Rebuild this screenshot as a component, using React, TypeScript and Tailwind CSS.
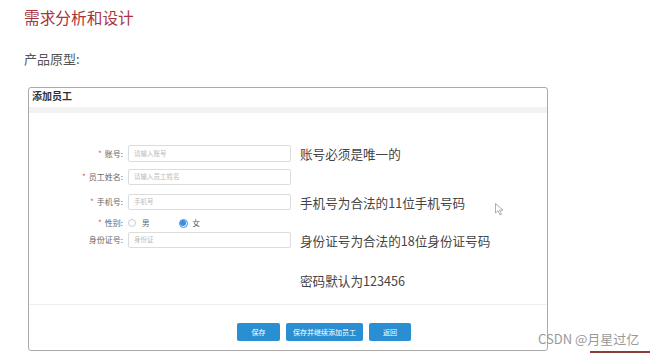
import React from "react";

const font = { fontFamily: '"Noto Sans CJK SC", "Noto Sans", sans-serif' };

function Label({ text, required }: { text: string; required?: boolean }) {
  return (
    <div className="w-[99px] shrink-0 pr-[5px] text-right text-[8px] leading-[12px] text-[#666]">
      {required && <span className="mr-[3px] text-[#e05050]">*</span>}
      {text}:
    </div>
  );
}

function Input({ placeholder, h = "h-[16px]" }: { placeholder: string; h?: string }) {
  return (
    <div
      className={`w-[163px] ${h} shrink-0 rounded-[2px] border border-[#dcdcdc] bg-white pl-[5px] flex items-center text-[6.5px] text-[#bbb]`}
    >
      {placeholder}
    </div>
  );
}

function Note({ text }: { text: string }) {
  return <div className="ml-[9px] whitespace-nowrap text-[12.6px] leading-[17px] text-[#444]">{text}</div>;
}

export default function App() {
  return (
    <div className="relative h-[353px] w-[650px] overflow-hidden bg-white" style={font}>
      <div className="pl-[24px] pt-[8px] text-[15.7px] leading-[20px] text-[#a9343c]">需求分析和设计</div>
      <div className="mt-[22px] pl-[24px] text-[13px] leading-[18px] text-[#555]">产品原型:</div>

      <div className="ml-[28px] mt-[19px] flex h-[264px] w-[520px] flex-col rounded-[3px] border border-[#aaa]">
        <div className="h-[19px] pl-[3px] pt-[1px] text-[10px] font-bold leading-[14px] text-[#333]">添加员工</div>
        <div className="h-[6px] bg-[#f2f2f2]" />

        <div className="flex flex-col pt-[32px]">
          <div className="flex h-[17px] items-center">
            <Label text="账号" required />
            <Input placeholder="请输入账号" h="h-[17px]" />
            <Note text="账号必须是唯一的" />
          </div>
          <div className="mt-[7px] flex h-[16px] items-center">
            <Label text="员工姓名" required />
            <Input placeholder="请输入员工姓名" />
          </div>
          <div className="mt-[9px] flex h-[16px] items-center">
            <Label text="手机号" required />
            <Input placeholder="手机号" />
            <Note text="手机号为合法的11位手机号码" />
          </div>
          <div className="mt-[6px] flex h-[14px] items-center">
            <Label text="性别" required />
            <div className="flex items-center text-[7.5px] text-[#666]">
              <span className="h-[8px] w-[8px] rounded-full border border-[#ccc] bg-white" />
              <span className="ml-[6px]">男</span>
              <span className="ml-[29px] flex h-[9px] w-[9px] items-center justify-center rounded-full border border-[#3a8ee6] bg-white">
                <span className="h-[6px] w-[6px] rounded-full bg-[#3a8ee6]" />
              </span>
              <span className="ml-[5px]">女</span>
            </div>
          </div>
          <div className="mt-[2px] flex h-[16px] items-center">
            <Label text="身份证号" />
            <Input placeholder="身份证" />
            <Note text="身份证号为合法的18位身份证号码" />
          </div>
          <div className="mt-[24px] flex h-[17px] items-center">
            <div className="w-[262px] shrink-0" />
            <Note text="密码默认为123456" />
          </div>
        </div>

        <div className="mt-[15px] h-px bg-[#eeeeee]" />

        <div className="mt-[18px] flex gap-[6px] pl-[208px]">
          <div className="flex h-[18px] w-[43px] items-center justify-center rounded-[2px] bg-[#2a8fd2] text-[7px] text-white">保存</div>
          <div className="flex h-[18px] w-[77px] items-center justify-center rounded-[2px] bg-[#2a8fd2] text-[7px] text-white">保存并继续添加员工</div>
          <div className="flex h-[18px] w-[42px] items-center justify-center rounded-[2px] bg-[#2a8fd2] text-[7px] text-white">返回</div>
        </div>
      </div>

      <svg className="absolute left-[495px] top-[203px]" width="9" height="13" viewBox="0 0 9 13">
        <path d="M0.5 0.5 L0.5 10 L3 7.8 L5 12 L6.5 11.3 L4.6 7.2 L8 7.2 Z" fill="white" stroke="#999" strokeWidth="0.8" />
      </svg>

      <div className="absolute left-[538px] top-[330px] whitespace-nowrap text-[13px] leading-[17px] text-[#999]">CSDN @月星过亿</div>
      <div className="absolute left-[590px] top-[351px] h-[2px] w-[60px] bg-[#8c3b3b]" />
    </div>
  );
}
